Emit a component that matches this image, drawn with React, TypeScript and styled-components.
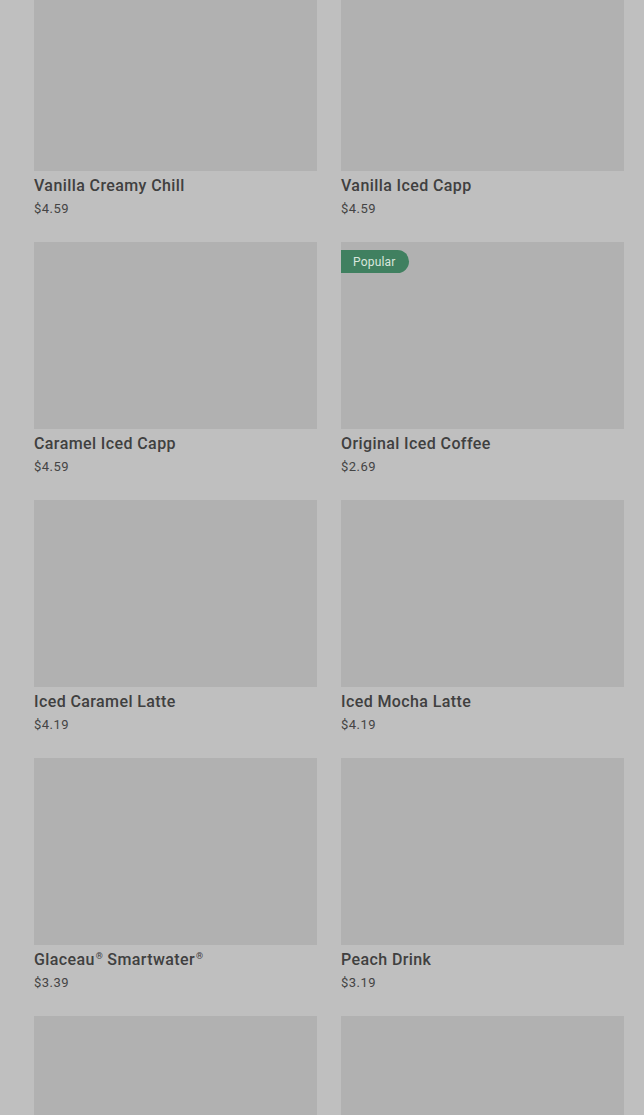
import React from "react";
import styled, { createGlobalStyle } from "styled-components";

const Global = createGlobalStyle`
  html, body { margin: 0; padding: 0; overflow: hidden; background: #bfbfbf; }
  body { font-family: Roboto, "Liberation Sans", Arial, sans-serif; }
`;

const Page = styled.div`
  background: #bfbfbf;
  min-height: 1115px;
  padding: 0 20px 0 34px;
`;

const Grid = styled.div`
  display: grid;
  grid-template-columns: 283px 283px;
  column-gap: 24px;
  row-gap: 23px;
  margin-top: -16px;
`;

const Card = styled.div`
  display: flex;
  flex-direction: column;
`;

const Thumb = styled.div`
  position: relative;
  height: 187px;
  background: #b1b1b1;
`;

const Badge = styled.span`
  position: absolute;
  top: 8px;
  left: 0;
  height: 23px;
  padding: 0 13px 0 12px;
  display: flex;
  align-items: center;
  background: #408060;
  color: #d8e6dd;
  font-size: 12px;
  letter-spacing: 0.2px;
  border-radius: 0 12px 12px 0;
`;

const Title = styled.div`
  margin-top: 4px;
  font-size: 16px;
  line-height: 22px;
  font-weight: 500;
  letter-spacing: 0.4px;
  color: #404040;
`;

const Reg = styled.sup`
  font-size: 9px;
  line-height: 0;
  vertical-align: 6px;
  letter-spacing: 0;
  margin-left: 1px;
`;

const Price = styled.div`
  margin-top: 2px;
  font-size: 13px;
  line-height: 20px;
  letter-spacing: 0.5px;
  color: #444444;
`;

const items: { name: React.ReactNode; price: string; popular?: boolean }[] = [
  { name: "Vanilla Creamy Chill", price: "$4.59" },
  { name: "Vanilla Iced Capp", price: "$4.59" },
  { name: "Caramel Iced Capp", price: "$4.59" },
  { name: "Original Iced Coffee", price: "$2.69", popular: true },
  { name: "Iced Caramel Latte", price: "$4.19" },
  { name: "Iced Mocha Latte", price: "$4.19" },
  {
    name: (
      <>
        Glaceau<Reg>®</Reg> Smartwater<Reg>®</Reg>
      </>
    ),
    price: "$3.39",
  },
  { name: "Peach Drink", price: "$3.19" },
  { name: "", price: "" },
  { name: "", price: "" },
];

export default function App() {
  return (
    <>
      <Global />
      <Page>
        <Grid>
          {items.map((it, i) => (
            <Card key={i}>
              <Thumb>{it.popular && <Badge>Popular</Badge>}</Thumb>
              <Title>{it.name}</Title>
              <Price>{it.price}</Price>
            </Card>
          ))}
        </Grid>
      </Page>
    </>
  );
}
